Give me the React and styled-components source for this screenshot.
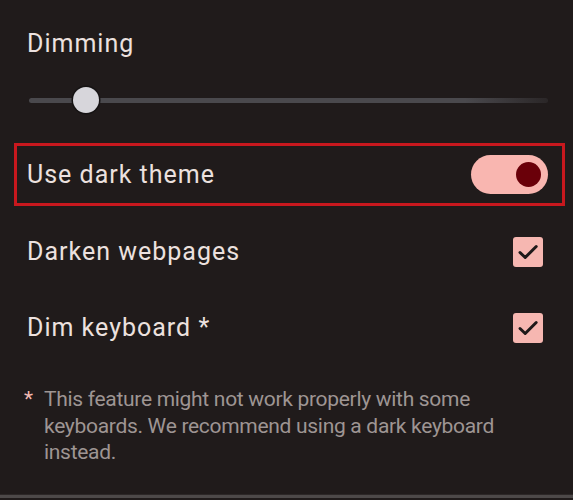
import React from 'react'
import styled, { createGlobalStyle } from 'styled-components'

const GlobalStyle = createGlobalStyle`
  html, body {
    margin: 0;
    padding: 0;
    background: #201b1b;
  }
  body {
    font-family: Roboto, "Noto Sans", sans-serif;
    -webkit-font-smoothing: antialiased;
  }
`

const Page = styled.div`
  width: 573px;
  height: 500px;
  box-sizing: border-box;
  padding: 30px 25px 0 27px;
  background: #201b1b;
  color: #ece1df;
  overflow: hidden;
`

const Title = styled.div`
  font-size: 25px;
  line-height: 28px;
  letter-spacing: 1px;
`

const Slider = styled.div`
  position: relative;
  height: 40px;
  margin: 22px 0 18px;
  display: flex;
  align-items: center;
`

const Track = styled.div`
  flex: 1;
  height: 5px;
  margin-left: 2px;
  border-radius: 3px;
  background: linear-gradient(to right, #4a494d 0%, #4a494d 84%, rgba(74, 73, 77, 0.25) 100%);
`

const Thumb = styled.div`
  position: absolute;
  top: 50%;
  left: ${p => p.$at}px;
  width: 26px;
  height: 26px;
  margin: -13px 0 0 -13px;
  border-radius: 50%;
  background: #d7d6db;
  box-shadow: 0 0 0 1.5px #151313;
`

const Row = styled.div`
  height: 76px;
  display: flex;
  align-items: center;
  justify-content: space-between;
  padding-right: ${p => p.$right || 0}px;
`

const Highlight = styled.div`
  flex: 1;
  height: 63px;
  margin: 0 -17px 3px -13px;
  box-sizing: border-box;
  border: 3px solid #c8181e;
  padding: 0 14px 0 10px;
  display: flex;
  align-items: center;
  justify-content: space-between;
`

const Label = styled.span`
  font-size: 25px;
  line-height: 28px;
  letter-spacing: 1px;
`

const Switch = styled.div`
  width: 77px;
  height: 39px;
  box-sizing: border-box;
  border-radius: 20px;
  background: #f9b6b0;
  display: flex;
  align-items: center;
  justify-content: flex-end;
  padding-right: 7px;
`

const Knob = styled.div`
  width: 25px;
  height: 25px;
  border-radius: 50%;
  background: #6a0009;
`

const Box = styled.div`
  width: 30px;
  height: 30px;
  border-radius: 3px;
  background: #f6b7b1;
  display: flex;
`

const Note = styled.div`
  display: flex;
  margin: 20px 0 0 -3px;
  font-size: 21px;
  line-height: 26.5px;
  letter-spacing: -0.3px;
  color: #9e9593;
`

const Star = styled.span`
  width: 20px;
  flex: none;
  color: #f2b9b2;
`

const Divider = styled.div`
  height: 3px;
  margin: 28px -25px 0 -27px;
  background: #4d4949;
  border-top: 1px solid #2c2727;
`

const Check = () => (
  <svg width="30" height="30" viewBox="0 0 30 30">
    <path d="M7 15.5 L12.2 20.5 L23.2 9.5" fill="none" stroke="#1e1919" strokeWidth="3" strokeLinecap="round" strokeLinejoin="round" />
  </svg>
)

const App = () => {
  return (
    <Page>
      <GlobalStyle />
      <Title>Dimming</Title>
      <Slider>
        <Track />
        <Thumb $at={59} />
      </Slider>
      <Row>
        <Highlight>
          <Label>Use dark theme</Label>
          <Switch>
            <Knob />
          </Switch>
        </Highlight>
      </Row>
      <Row $right={5}>
        <Label>Darken webpages</Label>
        <Box><Check /></Box>
      </Row>
      <Row $right={5}>
        <Label>Dim keyboard *</Label>
        <Box><Check /></Box>
      </Row>
      <Note>
        <Star>*</Star>
        <span>This feature might not work properly with some keyboards. We recommend using a dark keyboard instead.</span>
      </Note>
      <Divider />
    </Page>
  )
}

export default App
